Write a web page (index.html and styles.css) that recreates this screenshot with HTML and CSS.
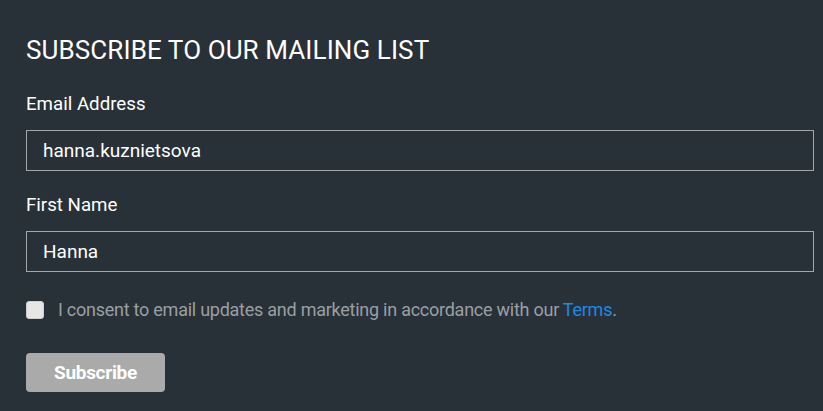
FILE: index.html
```html
<!DOCTYPE html>
<html lang="en">
<head>
    <meta charset="UTF-8">
    <meta name="viewport" content="width=device-width, initial-scale=1.0">
    <title>Subscribe</title>
    <link rel="stylesheet" href="styles.css">
</head>
<body>

<form class="signup">
    <h2 class="title">SUBSCRIBE TO OUR MAILING LIST</h2>

    <label class="label" for="email">Email Address</label>
    <input class="field" id="email" type="text" value="hanna.kuznietsova">

    <label class="label" for="fname">First Name</label>
    <input class="field" id="fname" type="text" value="Hanna">

    <label class="consent">
        <span class="box"></span>
        <span>I consent to email updates and marketing in accordance with our <a href="#" class="link">Terms</a>.</span>
    </label>

    <button class="button" type="button">Subscribe</button>
</form>

</body>
</html>
```

FILE: styles.css
```css
body {
    margin: 0;
    background-color: #283137;
    font-family: Roboto, "Liberation Sans", sans-serif;
    color: #fff;
}
.signup {
    display: flex;
    flex-direction: column;
    align-items: flex-start;
    padding: 34px 9px 0 26px;
}
.title {
    margin: 0 0 28px;
    font-size: 26px;
    font-weight: 400;
    line-height: 32px;
    letter-spacing: 0.1px;
}
.label {
    font-size: 18.7px;
    line-height: 20px;
    margin-bottom: 16px;
}
.field {
    box-sizing: border-box;
    width: 100%;
    height: 41px;
    margin: 0 0 24px;
    padding: 0 16px;
    background: transparent;
    border: 1px solid #a3a7aa;
    border-radius: 0;
    color: #fff;
    font-family: inherit;
    font-size: 19px;
    outline: none;
}
.consent {
    display: flex;
    align-items: center;
    gap: 14px;
    margin-top: 4px;
    color: #9a9fa3;
    font-size: 18px;
    line-height: 20px;
    letter-spacing: -0.25px;
}
.box {
    box-sizing: border-box;
    width: 18px;
    height: 18px;
    border-radius: 3px;
    border: 1px solid #cfcfcf;
    background: #e6e6e6;
}
.link {
    color: #1e88e5;
    text-decoration: none;
}
.button {
    margin-top: 33px;
    width: 139px;
    height: 39px;
    border: none;
    border-radius: 4px;
    background-color: #aaaaaa;
    color: #fff;
    font-family: inherit;
    font-size: 19px;
    font-weight: 700;
    letter-spacing: -0.3px;
    cursor: pointer;
}
```
